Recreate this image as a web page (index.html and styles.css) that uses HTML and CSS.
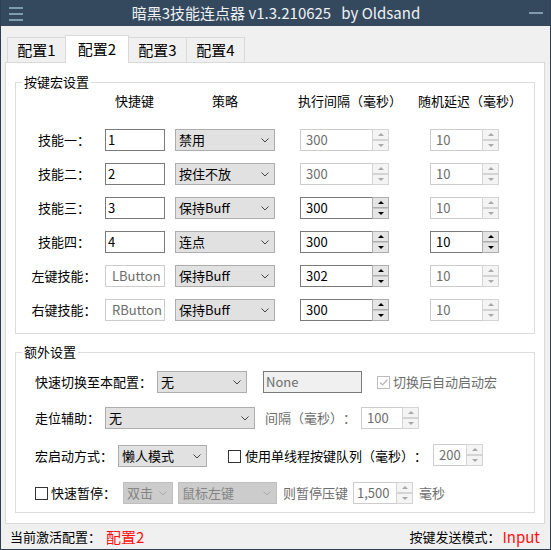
FILE: index.html
```html
<!DOCTYPE html>
<html lang="zh-CN">
<head>
<meta charset="utf-8">
<title>暗黑3技能连点器</title>
<link rel="stylesheet" href="styles.css">
</head>
<body>
<div class="window">
  <div class="titlebar">
    <svg class="menu" width="14" height="15" viewBox="0 0 14 15"><rect x="0" y="1" width="14" height="2" fill="#7f9bb0"/><rect x="0" y="7" width="14" height="2" fill="#7f9bb0"/><rect x="0" y="13" width="14" height="2" fill="#7f9bb0"/></svg>
    <div class="title">暗黑3技能连点器 v1.3.210625   by Oldsand</div>
    <svg class="min" width="14" height="14" viewBox="0 0 14 14"><rect x="0" y="6" width="14" height="2" fill="#7f9bb0"/></svg>
  </div>

  <div class="tabs">
    <div class="tab">配置1</div>
    <div class="tab active">配置2</div>
    <div class="tab">配置3</div>
    <div class="tab">配置4</div>
  </div>

  <div class="panel">
    <fieldset class="group g1">
      <legend>按键宏设置</legend>
      <div class="grid">
        <div class="hcell"></div>
        <div class="hcell h-key">快捷键</div>
        <div class="hcell h-str">策略</div>
        <div class="hcell h-int">执行间隔（毫秒）</div>
        <div class="hcell h-rnd">随机延迟（毫秒）</div>

        <div class="lab">技能一：</div>
        <div class="tb w60">1</div>
        <div class="sel w100"><span>禁用</span><svg class="chev" width="8" height="5" viewBox="0 0 8 5"><path d="M0.5 0.5L4 4L7.5 0.5" fill="none" stroke="#444"/></svg></div>
        <div class="spin w89 dis"><span class="sv">300</span><span class="sb"><i class="up"></i><i class="dn"></i></span></div>
        <div class="spin w69 dis"><span class="sv">10</span><span class="sb"><i class="up"></i><i class="dn"></i></span></div>

        <div class="lab">技能二：</div>
        <div class="tb w60">2</div>
        <div class="sel w100"><span>按住不放</span><svg class="chev" width="8" height="5" viewBox="0 0 8 5"><path d="M0.5 0.5L4 4L7.5 0.5" fill="none" stroke="#444"/></svg></div>
        <div class="spin w89 dis"><span class="sv">300</span><span class="sb"><i class="up"></i><i class="dn"></i></span></div>
        <div class="spin w69 dis"><span class="sv">10</span><span class="sb"><i class="up"></i><i class="dn"></i></span></div>

        <div class="lab">技能三：</div>
        <div class="tb w60">3</div>
        <div class="sel w100"><span>保持Buff</span><svg class="chev" width="8" height="5" viewBox="0 0 8 5"><path d="M0.5 0.5L4 4L7.5 0.5" fill="none" stroke="#444"/></svg></div>
        <div class="spin w89"><span class="sv">300</span><span class="sb"><i class="up"></i><i class="dn"></i></span></div>
        <div class="spin w69 dis"><span class="sv">10</span><span class="sb"><i class="up"></i><i class="dn"></i></span></div>

        <div class="lab">技能四：</div>
        <div class="tb w60">4</div>
        <div class="sel w100"><span>连点</span><svg class="chev" width="8" height="5" viewBox="0 0 8 5"><path d="M0.5 0.5L4 4L7.5 0.5" fill="none" stroke="#444"/></svg></div>
        <div class="spin w89"><span class="sv">300</span><span class="sb"><i class="up"></i><i class="dn"></i></span></div>
        <div class="spin w69"><span class="sv">10</span><span class="sb"><i class="up"></i><i class="dn"></i></span></div>

        <div class="lab">左键技能：</div>
        <div class="tb w60 dis pad6">LButton</div>
        <div class="sel w100"><span>保持Buff</span><svg class="chev" width="8" height="5" viewBox="0 0 8 5"><path d="M0.5 0.5L4 4L7.5 0.5" fill="none" stroke="#444"/></svg></div>
        <div class="spin w89"><span class="sv">302</span><span class="sb"><i class="up"></i><i class="dn"></i></span></div>
        <div class="spin w69 dis"><span class="sv">10</span><span class="sb"><i class="up"></i><i class="dn"></i></span></div>

        <div class="lab">右键技能：</div>
        <div class="tb w60 dis pad6">RButton</div>
        <div class="sel w100"><span>保持Buff</span><svg class="chev" width="8" height="5" viewBox="0 0 8 5"><path d="M0.5 0.5L4 4L7.5 0.5" fill="none" stroke="#444"/></svg></div>
        <div class="spin w89"><span class="sv">300</span><span class="sb"><i class="up"></i><i class="dn"></i></span></div>
        <div class="spin w69 dis"><span class="sv">10</span><span class="sb"><i class="up"></i><i class="dn"></i></span></div>
      </div>
    </fieldset>

    <fieldset class="group g2">
      <legend>额外设置</legend>
      <div class="row r1">
        <span class="txt">快速切换至本配置：</span>
        <div class="sel w90 ml5"><span>无</span><svg class="chev" width="8" height="5" viewBox="0 0 8 5"><path d="M0.5 0.5L4 4L7.5 0.5" fill="none" stroke="#444"/></svg></div>
        <div class="tb ro w99 ml16">None</div>
        <span class="cb dis checked ml15"><svg width="11" height="11" viewBox="0 0 11 11"><path d="M2 5.5L4.5 8L9.5 2.5" fill="none" stroke="#b4b4b4" stroke-width="1.2"/></svg></span>
        <span class="txt grey ml3">切换后自动启动宏</span>
      </div>
      <div class="row r2">
        <span class="txt">走位辅助：</span>
        <div class="sel w150 ml5"><span>无</span><svg class="chev" width="8" height="5" viewBox="0 0 8 5"><path d="M0.5 0.5L4 4L7.5 0.5" fill="none" stroke="#444"/></svg></div>
        <span class="txt grey ml10">间隔（毫秒）：</span>
        <div class="spin w58 dis ml5"><span class="sv">100</span><span class="sb"><i class="up"></i><i class="dn"></i></span></div>
      </div>
      <div class="row r3">
        <span class="txt">宏启动方式：</span>
        <div class="sel w89 ml5"><span>懒人模式</span><svg class="chev" width="8" height="5" viewBox="0 0 8 5"><path d="M0.5 0.5L4 4L7.5 0.5" fill="none" stroke="#444"/></svg></div>
        <span class="cb ml21"></span>
        <span class="txt ml4">使用单线程按键队列（毫秒）：</span>
        <div class="spin w50 dis ml6 up1"><span class="sv">200</span><span class="sb"><i class="up"></i><i class="dn"></i></span></div>
      </div>
      <div class="row r4">
        <span class="cb"></span>
        <span class="txt ml3">快速暂停：</span>
        <div class="sel w50 ml7 dis"><span>双击</span><svg class="chev" width="8" height="5" viewBox="0 0 8 5"><path d="M0.5 0.5L4 4L7.5 0.5" fill="none" stroke="#a8a8a8"/></svg></div>
        <div class="sel w99 ml5 dis"><span>鼠标左键</span><svg class="chev" width="8" height="5" viewBox="0 0 8 5"><path d="M0.5 0.5L4 4L7.5 0.5" fill="none" stroke="#a8a8a8"/></svg></div>
        <span class="txt grey ml6">则暂停压键</span>
        <div class="spin w60 dis ml5 tight"><span class="sv">1,500</span><span class="sb"><i class="up"></i><i class="dn"></i></span></div>
        <span class="txt grey ml6">毫秒</span>
      </div>
    </fieldset>
  </div>

  <div class="status">
    <div class="st-left"><span class="txt">当前激活配置：</span><span class="red ml5">配置2</span></div>
    <div class="st-right"><span class="txt">按键发送模式：</span><span class="red ml2">Input</span></div>
  </div>
</div>
</body>
</html>
```

FILE: styles.css
```css
* { box-sizing: border-box; }

body {
  margin: 0;
  font-family: "Noto Sans CJK SC", "Noto Sans", sans-serif;
  font-size: 13px;
  color: #000;
  background: #f0f0f0;
  text-spacing-trim: space-all;
}

.window {
  width: 551px;
  height: 550px;
  background: #f0f0f0;
  border: 1px solid #2c3e50;
  border-top: 0;
  display: flex;
  flex-direction: column;
  overflow: hidden;
}

/* title bar */
.titlebar {
  flex: none;
  height: 26px;
  background: #34495e;
  display: flex;
  align-items: center;
  padding: 0 7px 0 8px;
}
.menu, .min { flex: none; display: block; }
.title {
  flex: 1;
  text-align: center;
  color: #eef2f5;
  font-size: 15px;
  line-height: 26px;
  white-space: pre;
}

/* tabs */
.tabs {
  flex: none;
  margin-top: 9px;
  height: 27px;
  display: flex;
  align-items: flex-end;
  padding-left: 6px;
}
.tab {
  width: 59px;
  height: 25px;
  border: 1px solid #d9d9d9;
  border-bottom: 0;
  background: #f0f0f0;
  font-size: 15px;
  line-height: 24px;
  text-align: center;
  margin-left: -1px;
}
.tab:first-child { margin-left: 0; }
.tab.active {
  width: 64px;
  height: 28px;
  margin-bottom: -1px;
  background: #fff;
  position: relative;
  z-index: 1;
  line-height: 25px;
}

/* panel */
.panel {
  flex: none;
  height: 462px;
  margin: 0 5px 0 4px;
  background: #fff;
  border: 1px solid #d9d9d9;
  padding: 0 9px;
}

.group {
  margin: 0;
  border: 1px solid #dcdcdc;
  padding: 0;
  min-width: 0;
}
.group legend {
  margin-left: 6px;
  padding: 0 2px;
  font-size: 13px;
  line-height: 16px;
}
.g1 { margin-top: 11px; padding: 2px 0 12px 0; }
.g2 { margin-top: 10px; padding: 11px 0 8px 0; }

/* grid of skill rows */
.grid {
  display: grid;
  grid-template-columns: 89px 70px 125px 130px 69px;
  grid-template-rows: 25px repeat(6, 22px);
  row-gap: 12px;
}
.hcell {
  line-height: 18px;
  white-space: nowrap;
  align-self: start;
}
.h-key { margin-left: 10px; }
.h-str { margin-left: 37px; }
.h-int { margin-left: -2px; }
.h-rnd { margin-left: -12px; }

.lab {
  padding-left: 7px;
  text-align: center;
  line-height: 22px;
  white-space: nowrap;
}

/* text box */
.tb {
  height: 22px;
  border: 1px solid #7a7a7a;
  background: #fff;
  padding-left: 2px;
  line-height: 20px;
  white-space: nowrap;
  overflow: hidden;
}
.tb.dis { border-color: #cccccc; color: #6d6d6d; }
.tb.pad6 { padding-left: 6px; }
.tb.ro { background: #f0f0f0; color: #6d6d6d; border-color: #7a7a7a; padding-left: 2px; }

/* select */
.sel {
  height: 22px;
  border: 1px solid #adadad;
  background: #e1e1e1;
  display: flex;
  align-items: center;
  justify-content: space-between;
  padding: 0 5px 0 3px;
  line-height: 20px;
  white-space: nowrap;
}
.sel .chev { flex: none; display: block; }
.sel.dis { background: #cccccc; border-color: #bfbfbf; color: #838383; }

/* spin box */
.spin { height: 22px; display: flex; }
.sv {
  flex: 1;
  border: 1px solid #7a7a7a;
  border-right: 0;
  background: #fff;
  padding-left: 5px;
  line-height: 20px;
  white-space: nowrap;
}
.spin.tight .sv { padding-left: 3px; }
.sb {
  flex: none;
  width: 17px;
  display: flex;
  flex-direction: column;
}
.sb i {
  height: 11px;
  border: 1px solid #adadad;
  background: #e5e5e5;
  display: flex;
  align-items: center;
  justify-content: center;
}
.sb i.dn { border-top-color: #c8c8c8; }
.sb i.up::before {
  content: "";
  border-left: 3px solid transparent;
  border-right: 3px solid transparent;
  border-bottom: 3px solid #000;
}
.sb i.dn::before {
  content: "";
  border-left: 3px solid transparent;
  border-right: 3px solid transparent;
  border-top: 3px solid #000;
}
.spin.dis .sv { border-color: #cccccc; color: #6d6d6d; }
.spin.dis .sb i { border-color: #d4d4d4; background: #f4f4f4; }
.spin.dis .sb i.up::before { border-bottom-color: #a8a8a8; }
.spin.dis .sb i.dn::before { border-top-color: #a8a8a8; }

.w50 { width: 50px; }
.w58 { width: 58px; }
.w60 { width: 60px; }
.w69 { width: 69px; }
.w89 { width: 89px; }
.w90 { width: 90px; }
.w99 { width: 99px; }
.w100 { width: 100px; }
.w150 { width: 150px; }

/* rows in extra settings */
.row {
  display: flex;
  align-items: center;
  height: 22px;
  padding-left: 19px;
}
.r2 { margin-top: 14px; }
.r3 { margin-top: 16px; }
.r4 { margin-top: 15px; }
.txt { white-space: nowrap; line-height: 22px; }
.grey { color: #6d6d6d; }
.up1 { margin-top: -2px; }

.cb {
  flex: none;
  width: 13px;
  height: 13px;
  border: 1px solid #333;
  background: #fff;
  display: flex;
  align-items: center;
  justify-content: center;
}
.cb.dis { border-color: #bcbcbc; }
.cb svg { display: block; }

.ml2 { margin-left: 2px; }
.ml3 { margin-left: 3px; }
.ml4 { margin-left: 4px; }
.ml5 { margin-left: 5px; }
.ml6 { margin-left: 6px; }
.ml7 { margin-left: 7px; }
.ml10 { margin-left: 10px; }
.ml15 { margin-left: 15px; }
.ml16 { margin-left: 16px; }
.ml21 { margin-left: 21px; }

/* status bar */
.status {
  flex: none;
  height: 25px;
  display: flex;
  align-items: center;
  justify-content: space-between;
  padding: 0 10px 0 9px;
}
.st-left, .st-right { display: flex; align-items: center; }
.red { color: #ff1010; font-size: 15px; line-height: 22px; }
```
